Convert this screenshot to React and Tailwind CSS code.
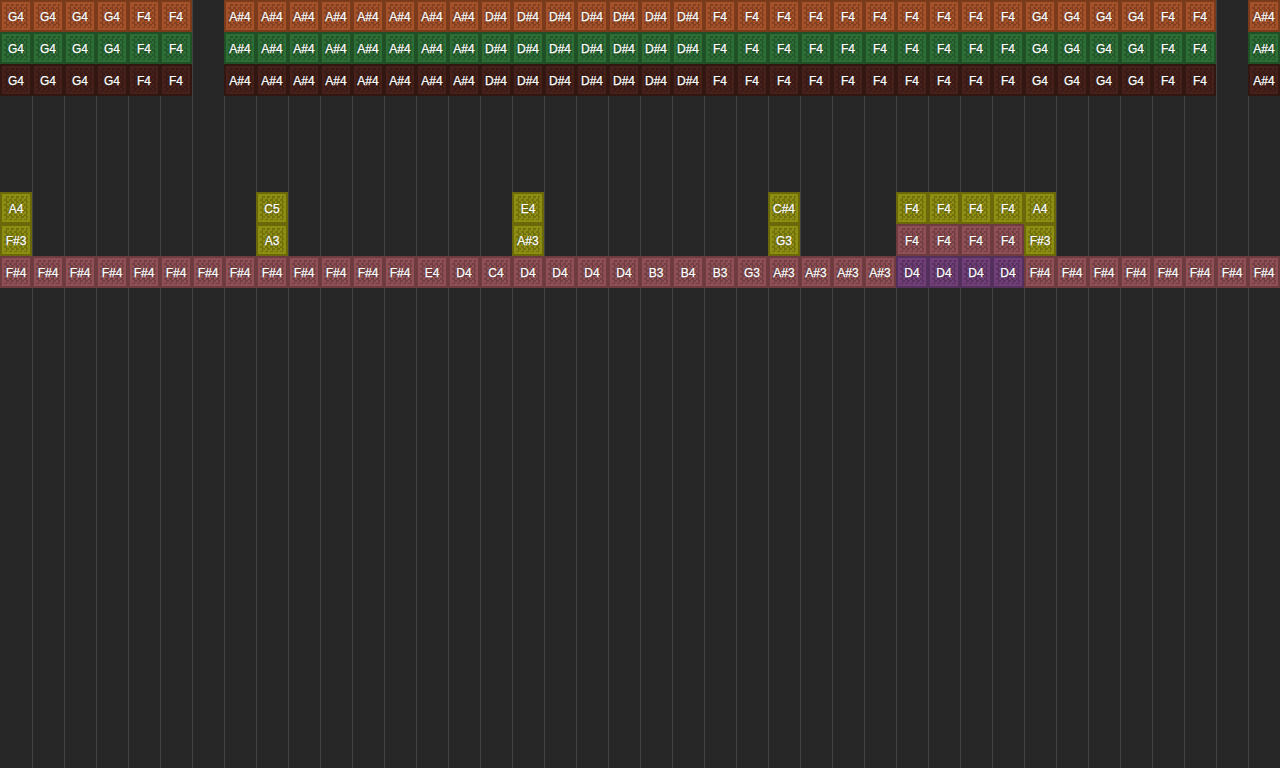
const K = {
  o: 'bg-[#a5512a] border-[#7a3b1c]',
  g: 'bg-[#2d6d36] border-[#1f5026]',
  m: 'bg-[#45211a] border-[#321611]',
  y: 'bg-[#8d8d12] border-[#69690c]',
  p: 'bg-[#8f5055] border-[#6e3c40]',
  v: 'bg-[#703f78] border-[#54305c]',
};
const expand = (spec) => spec.flatMap(([n, c]) => Array(c).fill(n));
const top = expand([['G4',4],['F4',2],[null,1],['A#4',8],['D#4',7],['F4',10],['G4',4],['F4',2],[null,1],['A#4',1]]);
const bass = expand([['F#4',13],['E4',1],['D4',1],['C4',1],['D4',4],['B3',1],['B4',1],['B3',1],['G3',1],['A#3',4],['D4',4],['F#4',8]]);
const r6 = { 0:'A4', 8:'C5', 16:'E4', 24:'C#4', 28:'F4', 29:'F4', 30:'F4', 31:'F4', 32:'A4' };
const r7 = { 0:'F#3', 8:'A3', 16:'A#3', 24:'G3', 28:'F4', 29:'F4', 30:'F4', 31:'F4', 32:'F#3' };

function Note({ name, kind }) {
  return (
    <div className={`w-8 h-8 shrink-0 border-2 p-[2px] ${K[kind]}`}>
      <div className="w-full h-full flex items-center justify-center pt-[2px] text-[12px] leading-none text-white [font-family:'Liberation_Sans',Arial,sans-serif] [-webkit-text-stroke:0.25px_white] [text-shadow:0_0_2px_rgba(0,0,0,0.55)] bg-[repeating-conic-gradient(rgba(0,0,0,0.2)_0_25%,transparent_0_50%)] bg-[length:5px_5px]">
        {name}
      </div>
    </div>
  );
}
const Empty = () => <div className="w-8 h-8 shrink-0" />;

export default function App() {
  return (
    <div className="w-[1280px] h-[768px] overflow-hidden bg-[#272727] flex">
      {top.map((n, i) => (
        <div key={i} className="w-8 h-[768px] shrink-0 flex flex-col border-l border-l-[#424242] first:border-l-0 [&>*]:-ml-px first:[&>*]:ml-0">
          {n ? <Note name={n} kind="o" /> : <Empty />}
          {n ? <Note name={n} kind="g" /> : <Empty />}
          {n ? <Note name={n} kind="m" /> : <Empty />}
          <div className="h-[96px] shrink-0" />
          {r6[i] ? <Note name={r6[i]} kind="y" /> : <Empty />}
          {r7[i] ? <Note name={r7[i]} kind={i >= 28 && i <= 31 ? 'p' : 'y'} /> : <Empty />}
          <Note name={bass[i]} kind={i >= 28 && i <= 31 ? 'v' : 'p'} />
        </div>
      ))}
    </div>
  );
}
